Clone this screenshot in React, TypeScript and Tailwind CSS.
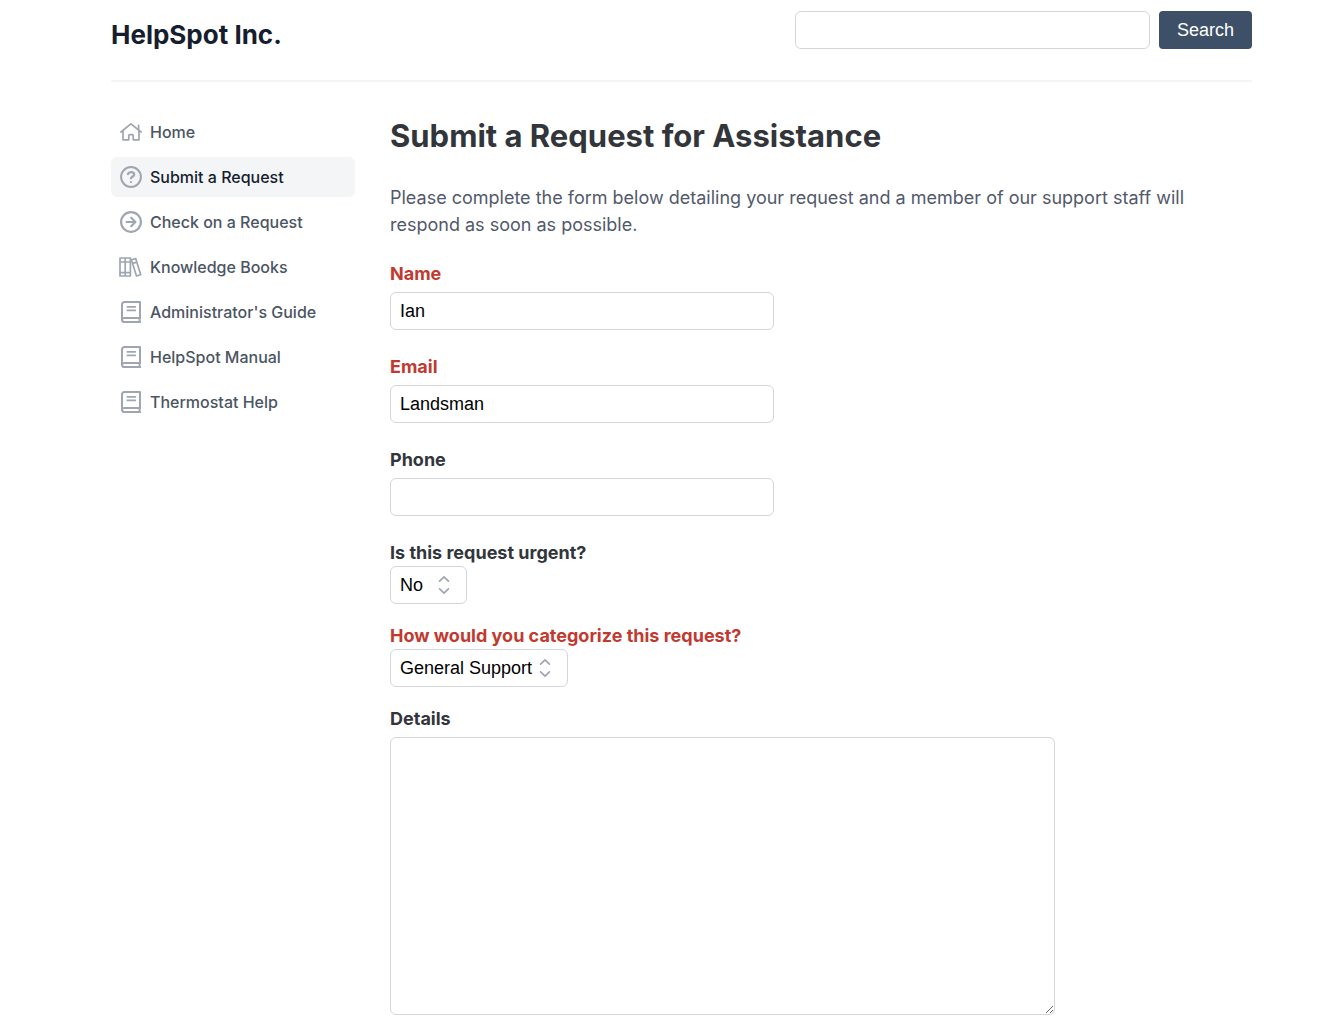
import type { ReactNode } from "react";
import clsx from "clsx";

const iconProps = {
  className: "size-[22px] shrink-0 text-[#9fa6b2]",
  fill: "none",
  stroke: "currentColor",
  "aria-hidden": true,
};

function HomeIcon() {
  return (
    <svg {...iconProps} viewBox="0 0 22 22" strokeWidth="1.7" strokeLinecap="round" strokeLinejoin="round">
      <path d="M.9 11 10.9 2.9 21.1 11" />
      <path d="M18.6 8.6V4.4" />
      <path d="M3 9.8v9h5.8v-4.3c0-.5.3-.8.8-.8h2.8c.5 0 .8.3.8.8v4.3H19v-9" />
    </svg>
  );
}

function QuestionIcon() {
  return (
    <svg {...iconProps} viewBox="0 0 22 22" strokeWidth="2" strokeLinecap="round">
      <circle cx="11" cy="11" r="9.9" />
      <path
        d="M7.9 8C8.4 6.7 9.5 6.2 11 6.2c1.9 0 3.2.9 3.2 2.4 0 2.1-3.2 2-3.2 3.7M11 16.1h.01"
        strokeWidth="2.3"
      />
    </svg>
  );
}

function ArrowIcon() {
  return (
    <svg {...iconProps} viewBox="2 2 20 20" strokeWidth="2" strokeLinecap="round" strokeLinejoin="round">
      <path d="m12.2 8.2 3.8 3.8m0 0-3.8 3.8M16 12H8m13 0a9 9 0 1 1-18 0 9 9 0 0 1 18 0Z" />
    </svg>
  );
}

function BooksIcon() {
  return (
    <svg {...iconProps} viewBox="1 0 22 22" strokeWidth="1.7" strokeLinejoin="round" overflow="visible">
      <path d="M1 2h10.4v18H1zM6.2 2v18M1 6h10.4M1 16.6h10.4" />
      <path d="m12.4 3.8 4.3-1.2 5 16.2-4.2 1.2zM13.6 7.4l4.2-1.2" />
    </svg>
  );
}

function BookIcon() {
  return (
    <svg {...iconProps} viewBox="0 0 22 22" strokeWidth="2" strokeLinecap="round" strokeLinejoin="round">
      <path d="M20 17V1H4.4A2.4 2.4 0 0 0 2 3.4v15.4A2.4 2.4 0 0 0 4.4 21H20" />
      <path d="M2 18.6A2.2 2.2 0 0 1 4.2 17H20q-1 2 0 4" />
      <path d="M7.4 5.8h7.8M7.4 9.4h7.8" strokeWidth="1.8" />
    </svg>
  );
}

const navItems = [
  { label: "Home", icon: <HomeIcon /> },
  { label: "Submit a Request", icon: <QuestionIcon />, active: true },
  { label: "Check on a Request", icon: <ArrowIcon /> },
  { label: "Knowledge Books", icon: <BooksIcon /> },
  { label: "Administrator's Guide", icon: <BookIcon /> },
  { label: "HelpSpot Manual", icon: <BookIcon /> },
  { label: "Thermostat Help", icon: <BookIcon /> },
];

const controlClass =
  "rounded-md border border-[#d2d6dc] bg-white font-['Liberation_Sans',Arial,sans-serif] text-lg text-black";

type FieldProps = {
  id: string;
  label: string;
  required?: boolean;
};

function FieldLabel({ id, label, required }: FieldProps) {
  return (
    <label
      htmlFor={id}
      className={clsx("block text-lg leading-[27px] font-bold", required ? "text-[#c03a30]" : "text-[#32363b]")}
    >
      {label}
    </label>
  );
}

function TextField({ value, ...field }: FieldProps & { value?: string }) {
  return (
    <div className="mb-[23px]">
      <FieldLabel {...field} />
      <input
        id={field.id}
        type="text"
        defaultValue={value}
        className={clsx(controlClass, "mt-[5px] block h-[38px] w-full max-w-96 px-[9px]")}
      />
    </div>
  );
}

function SelectField({ width, children, ...field }: FieldProps & { width: string; children: ReactNode }) {
  return (
    <div className="mb-[18px]">
      <FieldLabel {...field} />
      <div className={clsx("relative", width)}>
        <select id={field.id} className={clsx(controlClass, "block h-[38px] w-full appearance-none pl-[9px]")}>
          {children}
        </select>
        <svg
          className="pointer-events-none absolute top-2 right-3 size-[22px] text-[#9fa6b2]"
          viewBox="0 0 22 22"
          fill="none"
          stroke="currentColor"
          strokeWidth="1.7"
          strokeLinecap="round"
          strokeLinejoin="round"
          aria-hidden="true"
        >
          <path d="m6.6 7.2 4.4-4.4 4.4 4.4M6.6 14.8l4.4 4.4 4.4-4.4" />
        </svg>
      </div>
    </div>
  );
}

export default function App() {
  return (
    <div className="min-h-screen bg-white pt-[11px] pr-[74px] pb-4 pl-[111px] font-[Inter,sans-serif]">
      <header className="flex items-start justify-between border-b-2 border-[#f4f5f7] pb-[25px]">
        <a href="#" className="pt-1 text-[26px] leading-10 font-bold text-[#161e2e]">
          HelpSpot Inc.
        </a>
        <form className="flex gap-[9px]">
          <input type="search" aria-label="Search" className={clsx(controlClass, "h-[38px] w-[355px] px-[9px]")} />
          <button
            type="button"
            className="h-[38px] rounded bg-[#3d5068] px-[18px] font-['Liberation_Sans',Arial,sans-serif] text-lg text-white"
          >
            Search
          </button>
        </form>
      </header>

      <div className="flex gap-[35px] pt-[27px]">
        <nav className="flex w-[244px] shrink-0 flex-col gap-[5px] pt-[3px]">
          {navItems.map(({ label, icon, active }) => (
            <a
              key={label}
              href="#"
              aria-current={active ? "page" : undefined}
              className={clsx(
                "flex h-10 items-center gap-2 rounded-md px-[9px] text-base font-medium",
                active ? "bg-[#f4f5f7] text-[#161e2e]" : "text-[#4b5563]",
              )}
            >
              {icon}
              {label}
            </a>
          ))}
        </nav>

        <main className="min-w-0 flex-1">
          <h1 className="pt-[5px] text-[31px] leading-[44px] font-bold text-[#32363b]">
            Submit a Request for Assistance
          </h1>
          <p className="mt-[26px] max-w-[800px] text-lg leading-[27px] text-[#52596b]">
            Please complete the form below detailing your request and a member of our support staff will respond as
            soon as possible.
          </p>

          <form className="mt-[22px]">
            <TextField id="name" label="Name" value="Ian" required />
            <TextField id="email" label="Email" value="Landsman" required />
            <TextField id="phone" label="Phone" />
            <SelectField id="urgent" label="Is this request urgent?" width="w-[77px]">
              <option>No</option>
              <option>Yes</option>
            </SelectField>
            <SelectField id="category" label="How would you categorize this request?" width="w-[178px]" required>
              <option>General Support</option>
            </SelectField>
            <FieldLabel id="details" label="Details" />
            <textarea
              id="details"
              className={clsx(controlClass, "mt-[5px] block h-[278px] w-full max-w-[665px] resize p-[9px]")}
            />
          </form>
        </main>
      </div>
    </div>
  );
}
